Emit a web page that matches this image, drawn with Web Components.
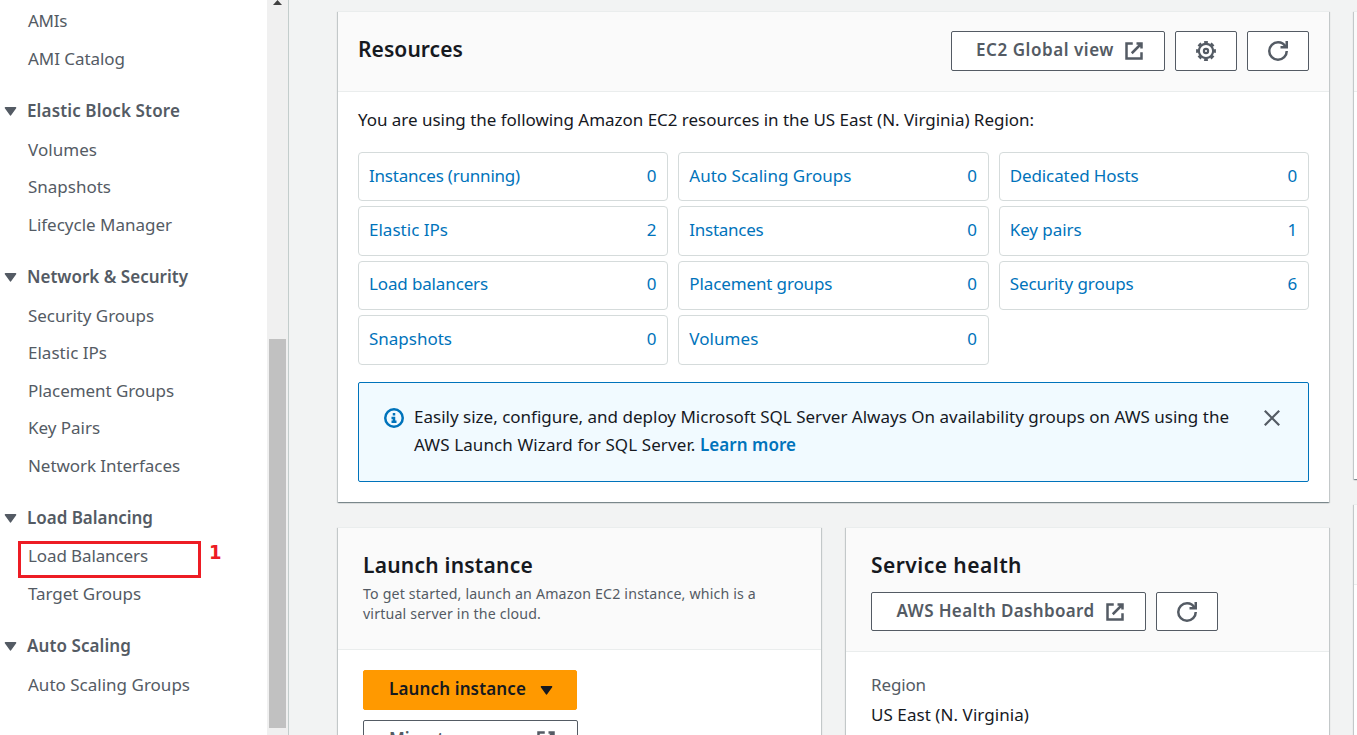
<!DOCTYPE html>
<html lang="en"><head><meta charset="utf-8"><title>EC2 Dashboard</title>
<style>
html,body{margin:0;height:100%;overflow:hidden}
body{font-family:"Noto Sans","Open Sans",sans-serif;font-size:17px;color:#16191f;background:#f2f3f3}
</style></head><body>
<ec2-dashboard></ec2-dashboard>
<script>
const define=(name,html,init)=>customElements.define(name,class extends HTMLElement{
  constructor(){super();this.attachShadow({mode:'open'}).innerHTML=html;}
  connectedCallback(){if(init)init.call(this,this.shadowRoot);}
});

// Text whose tracking is tuned so the run takes the given advance width
define('fit-text',`<style>:host{display:inline-block;white-space:pre;vertical-align:baseline}span{display:inline-block}</style><span><slot></slot></span>`,function(r){
  const s=r.querySelector('span'),w=+this.getAttribute('w'),n=this.textContent.length;
  if(!w)return;
  const nat=s.getBoundingClientRect().width;
  if(nat)s.style.letterSpacing=((w-nat)/n).toFixed(4)+'px';
  this.style.width=w+'px';
});

const icons={
  external:'<path d="M10 2h4v4M6.2 9.8L14 2M14 9v5H2V2h5"/>',
  refresh:'<path d="M15 0v5h-5"/><path d="M15 8c0 3.87-3.13 7-7 7s-7-3.13-7-7 3.13-7 7-7c2.79 0 5.2 1.63 6.32 4"/>',
  settings:'<circle cx="8" cy="8" r="1.7" stroke-width="1.7"/><circle cx="8" cy="8" r="5.7" stroke-width="1.7"/><circle cx="8" cy="8" r="7" stroke-width="1.9" pathLength="80" stroke-dasharray="5.6 4.4" stroke-dashoffset="2.8"/>',
  info:'<circle cx="8" cy="8" r="7"/><path d="M8 11V8H6M10 11H6" stroke-linejoin="miter"/><path d="M8 6V4"/>',
  close:'<path d="M1.6 1.6l12.8 12.8M14.4 1.6L1.6 14.4"/>',
  caret:'<path d="M2.6 4h10.8L8 11.6z" fill="currentColor" stroke-width="1.6" stroke-linejoin="round"/>'
};
define('ui-icon',`<style>:host{display:inline-flex;width:20px;height:20px;flex:none}svg{width:100%;height:100%;overflow:visible;fill:none;stroke:currentColor;stroke-width:2}</style><svg viewBox="0 0 16 16"></svg>`,function(r){
  r.querySelector('svg').innerHTML=icons[this.getAttribute('name')];
});

define('nav-link',`<style>:host{display:block;height:37.5px;line-height:37.5px;padding-left:28px;color:#545b64}</style><slot></slot>`);

define('nav-group',`<style>
:host{display:block;margin-top:14.5px;color:#545b64}
.h{display:flex;align-items:center;height:37.5px;line-height:37.5px;font-weight:600;margin-bottom:var(--gap,1.5px)}
ui-icon{width:15px;height:15px;margin:2px 9.5px 0 2.5px}
</style><div class="h"><ui-icon name="caret"></ui-icon><slot name="title"></slot></div><slot></slot>`);

define('side-nav',`<style>
:host{display:flex;flex:none;width:288px;border-right:1px solid #c3cdcc;background:#fff;overflow:hidden}
nav{flex:1;padding-top:2.2px}
.tight{--gap:1px}
.mark{position:relative}
.box{position:absolute;left:18px;top:4px;width:177px;height:31px;border:3px solid #ed1c24}
.n{position:absolute;left:209px;top:-3px;color:#ed1c24;font:bold 20px/37px "DejaVu Sans Condensed","DejaVu Sans",sans-serif}
.bar{width:21px;background:#f0f0f0;display:flex;flex-direction:column;align-items:center}
.bar svg{width:9px;height:5px;display:block}
.thumb{margin-top:334px;width:17px;height:389px;background:#c1c1c1}
</style>
<nav>
<nav-link><fit-text w="39">AMIs</fit-text></nav-link>
<nav-link><fit-text w="97">AMI Catalog</fit-text></nav-link>
<nav-group><fit-text slot="title" w="153">Elastic Block Store</fit-text>
<nav-link><fit-text w="69">Volumes</fit-text></nav-link>
<nav-link><fit-text w="83">Snapshots</fit-text></nav-link>
<nav-link><fit-text w="144">Lifecycle Manager</fit-text></nav-link></nav-group>
<nav-group><fit-text slot="title" w="161">Network &amp; Security</fit-text>
<nav-link><fit-text w="126">Security Groups</fit-text></nav-link>
<nav-link><fit-text w="79">Elastic IPs</fit-text></nav-link>
<nav-link><fit-text w="146">Placement Groups</fit-text></nav-link>
<nav-link><fit-text w="72">Key Pairs</fit-text></nav-link>
<nav-link><fit-text w="152">Network Interfaces</fit-text></nav-link></nav-group>
<nav-group class="tight"><fit-text slot="title" w="126">Load Balancing</fit-text>
<nav-link class="mark"><fit-text w="120">Load Balancers</fit-text><span class="box"></span><span class="n">1</span></nav-link>
<nav-link><fit-text w="113">Target Groups</fit-text></nav-link></nav-group>
<nav-group><fit-text slot="title" w="104">Auto Scaling</fit-text>
<nav-link><fit-text w="162">Auto Scaling Groups</fit-text></nav-link></nav-group>
</nav>
<div class="bar"><svg viewBox="0 0 9 5"><path d="M0 5L4.5 0 9 5z" fill="#404040"/></svg><div class="thumb"></div></div>`);

define('ui-button',`<style>
:host{display:inline-flex;box-sizing:border-box;height:40px;align-items:center;justify-content:center;border:1px solid #545b64;border-radius:2px;background:#fff;color:#545b64;font-weight:600;line-height:24px}
:host([primary]){background:#f90;border-color:#f90;color:#16191f}
:host([icon]){width:62px}
::slotted(fit-text){margin-top:-2px}
</style><slot></slot>`);

define('ui-card',`<style>
:host{display:flex;flex-direction:column;box-sizing:border-box;background:#fff;border-top:1px solid #eaeded;box-shadow:0 1px 1px 0 rgba(0,28,36,.3),1px 1px 1px 0 rgba(0,28,36,.15),-1px 1px 1px 0 rgba(0,28,36,.15)}
header{box-sizing:border-box;flex:none;height:var(--head,80px);background:#fafafa;border-bottom:1px solid #eaeded;padding:var(--headpad,0)}
</style><header><slot name="header"></slot></header><slot></slot>`);

define('resource-tile',`<style>
:host{display:flex;justify-content:space-between;align-items:center;box-sizing:border-box;border:1px solid #d5dbdb;border-radius:4px;padding:0 10px 2px;color:#0073bb;line-height:24px}
</style><slot></slot><fit-text w="10.5"></fit-text>`,function(r){
  const f=r.querySelector('fit-text');f.textContent=this.getAttribute('count');
});

define('info-alert',`<style>
:host{display:flex;box-sizing:border-box;height:100px;border:1px solid #0073bb;border-radius:2px;background:#f1faff;padding:20px 27px 0 25px;line-height:28px}
.i{color:#0073bb;margin:5px 10px 0 0}
.t{flex:1}
.t ::slotted(*){display:block}
.x{width:18px;height:18px;color:#545b64;margin-top:6px}
</style><ui-icon class="i" name="info"></ui-icon><div class="t"><slot></slot></div><ui-icon class="x" name="close"></ui-icon>`);

define('resources-card',`<style>
:host{display:block}
ui-card{height:491px}
.head{display:flex;align-items:center;gap:10px;padding:0 20px;height:78px}
.head>*:first-child{margin:0 auto 4px 0}
.h{font-size:21px;font-weight:600}
ui-button ui-icon{margin-left:10px}
ui-button[icon] ui-icon{margin:0}
.body{padding:16px 20px 0}
p{margin:0;line-height:24px}
.grid{display:grid;grid-template-columns:repeat(3,1fr);grid-auto-rows:49.4px;gap:5px 10px;margin:20px 0 17.4px}
a{color:#0073bb;font-weight:600}
</style>
<ui-card>
<div slot="header" class="head"><span class="h"><fit-text w="105">Resources</fit-text></span>
<ui-button style="width:214px;padding-left:4px"><fit-text w="138">EC2 Global view</fit-text><ui-icon name="external"></ui-icon></ui-button>
<ui-button icon><ui-icon name="settings"></ui-icon></ui-button>
<ui-button icon><ui-icon name="refresh"></ui-icon></ui-button></div>
<div class="body"><p><fit-text w="676">You are using the following Amazon EC2 resources in the US East (N. Virginia) Region:</fit-text></p>
<div class="grid">
<resource-tile count="0"><fit-text w="151">Instances (running)</fit-text></resource-tile>
<resource-tile count="0"><fit-text w="162">Auto Scaling Groups</fit-text></resource-tile>
<resource-tile count="0"><fit-text w="129">Dedicated Hosts</fit-text></resource-tile>
<resource-tile count="2"><fit-text w="79">Elastic IPs</fit-text></resource-tile>
<resource-tile count="0"><fit-text w="74">Instances</fit-text></resource-tile>
<resource-tile count="1"><fit-text w="72">Key pairs</fit-text></resource-tile>
<resource-tile count="0"><fit-text w="119">Load balancers</fit-text></resource-tile>
<resource-tile count="0"><fit-text w="143">Placement groups</fit-text></resource-tile>
<resource-tile count="6"><fit-text w="124">Security groups</fit-text></resource-tile>
<resource-tile count="0"><fit-text w="83">Snapshots</fit-text></resource-tile>
<resource-tile count="0"><fit-text w="69">Volumes</fit-text></resource-tile>
</div>
<info-alert><div><fit-text w="815">Easily size, configure, and deploy Microsoft SQL Server Always On availability groups on AWS using the</fit-text></div><div><fit-text w="286">AWS Launch Wizard for SQL Server. </fit-text><a><fit-text w="96">Learn more</fit-text></a></div></info-alert>
</div></ui-card>`);

define('launch-card',`<style>
:host{display:block}
ui-card{height:300px;--head:122px;--headpad:23px 25px 0}
.h{font-size:21px;font-weight:600;line-height:28px}
.d{font-size:14.2px;line-height:20px;color:#545b64;margin-top:5px}
.d div{height:20px}
.body{padding:20px 25px;display:flex;flex-direction:column;align-items:flex-start;gap:10px}
ui-button{box-sizing:border-box;width:214px;padding-left:3px}
.c{width:15px;height:15px;margin:1px 0 0 13px}
.m ui-icon{margin-left:11px}
.m{width:215px;justify-content:flex-start;padding-left:25px}
</style><ui-card><div slot="header"><div class="h"><fit-text w="170">Launch instance</fit-text></div>
<div class="d"><div><fit-text w="393">To get started, launch an Amazon EC2 instance, which is a</fit-text></div><div><fit-text w="178">virtual server in the cloud.</fit-text></div></div></div>
<div class="body"><ui-button primary><fit-text w="137">Launch instance</fit-text><ui-icon class="c" name="caret"></ui-icon></ui-button>
<ui-button class="m"><fit-text w="136">Migrate a server</fit-text><ui-icon name="external"></ui-icon></ui-button></div></ui-card>`);

define('health-card',`<style>
:host{display:block}
ui-card{height:300px;--head:124px;--headpad:23px 25px 0}
.h{font-size:21px;font-weight:600;line-height:28px}
.b{display:flex;gap:10px;margin-top:13px}
ui-button{height:39px}
ui-button:first-child{width:275px;padding-left:4px}
ui-button:first-child ui-icon{margin-left:10px}
.body{padding:19px 25px}
.body div{height:30px;line-height:28px}
.r{color:#545b64}
</style><ui-card><div slot="header"><div class="h"><fit-text w="151">Service health</fit-text></div>
<div class="b"><ui-button><fit-text w="198">AWS Health Dashboard</fit-text><ui-icon name="external"></ui-icon></ui-button><ui-button icon><ui-icon name="refresh"></ui-icon></ui-button></div></div>
<div class="body"><div class="r"><fit-text w="55">Region</fit-text></div><div><fit-text w="158">US East (N. Virginia)</fit-text></div></div></ui-card>`);

define('ec2-dashboard',`<style>
:host{display:flex;height:735px;width:1357px;overflow:hidden}
main{flex:1;min-width:0;display:grid;grid-template-columns:991px 60px;gap:25px;padding:11px 0 0 49px;align-content:start}
.row{display:grid;grid-template-columns:483px 483px;gap:25px;margin-top:25px}
.side ui-card{height:468px}
.side ui-card+ui-card{margin-top:25px;height:300px}
</style><side-nav></side-nav><main><div><resources-card></resources-card><div class="row"><launch-card></launch-card><health-card></health-card></div></div>
<div class="side"><ui-card></ui-card><ui-card></ui-card></div></main>`);
</script></body></html>
